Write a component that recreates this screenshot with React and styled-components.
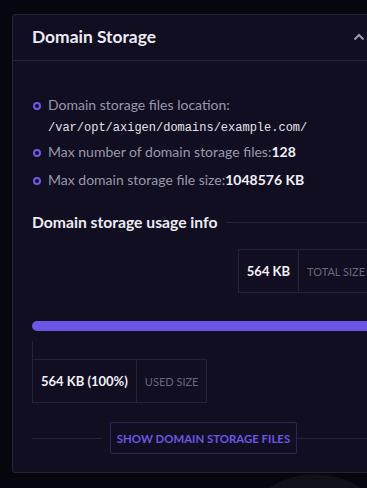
import React from "react";
import styled, { createGlobalStyle } from "styled-components";

const Global = createGlobalStyle`
  html, body { margin: 0; padding: 0; }
  body {
    background: radial-gradient(circle 86px at 315px 560px, #10111a 99%, transparent 100%), #06060f;
    font-family: "Lato", "Noto Sans", sans-serif;
    overflow: hidden;
    width: 367px;
    height: 488px;
  }
`;

const Page = styled.div`
  padding: 14px 0 0 12px;
  width: 420px;
`;

const Card = styled.section`
  width: 384px;
  background: #100e20;
  border: 1px solid #252338;
  border-radius: 3px;
  box-sizing: border-box;
`;

const Header = styled.div`
  height: 46px;
  display: flex;
  align-items: center;
  justify-content: space-between;
  padding: 0 30px 2px 19px;
  box-sizing: border-box;
  border-bottom: 1px solid #252338;
`;

const Title = styled.h2`
  margin: 0;
  font-size: 17.4px;
  font-weight: 700;
  color: #ecebf3;
`;

const Body = styled.div`
  padding: 33px 0 18px 19px;
`;

const List = styled.ul`
  list-style: none;
  margin: 0;
  padding: 0;
  display: flex;
  flex-direction: column;
`;

const Item = styled.li`
  position: relative;
  padding-left: 16px;
  padding-bottom: ${(p) => p.$gap || 0}px;
  font-size: 14px;
  line-height: 22px;
  color: #9a98aa;
  &::before {
    content: "";
    position: absolute;
    left: 1px;
    top: 8px;
    width: 4px;
    height: 4px;
    border: 2px solid #6e5ae8;
    border-radius: 50%;
  }
`;

const Mono = styled.div`
  font-family: "Liberation Mono", "DejaVu Sans Mono", monospace;
  font-size: 12px;
  line-height: 25px;
  color: #e3e2ea;
`;

const Strong = styled.b`
  color: #f2f1f7;
  font-weight: 700;
`;

const SectionHead = styled.div`
  display: flex;
  align-items: center;
  gap: 9px;
  margin-top: 20px;
  &::after {
    content: "";
    flex: 1;
    height: 1px;
    background: #252338;
  }
`;

const SectionTitle = styled.h3`
  margin: 0;
  font-size: 15.7px;
  font-weight: 700;
  color: #ecebf3;
  line-height: 22px;
`;

const Usage = styled.div`
  width: 344px;
`;

const Stat = styled.div`
  display: flex;
  height: 44px;
  border: 1px solid #252338;
  box-sizing: border-box;
  width: fit-content;
  margin-left: ${(p) => (p.$right ? "auto" : "0")};
  margin-top: ${(p) => p.$top || 0}px;
`;

const StatValue = styled.div`
  display: flex;
  align-items: center;
  padding: 0 8px;
  font-size: 13px;
  font-weight: 700;
  color: #f2f1f7;
  border-right: 1px solid #252338;
`;

const StatLabel = styled.div`
  display: flex;
  align-items: center;
  padding: 0 ${(p) => p.$pr || 8}px 0 8px;
  font-size: 11px;
  color: #6a6878;
  text-transform: uppercase;
`;

const Bar = styled.div`
  margin-top: 28px;
  height: 10px;
  border-radius: 5px;
  background: #6b57e6;
`;

const Tick = styled.div`
  width: 1px;
  height: 18px;
  margin-top: 10px;
  background: #252338;
`;

const Footer = styled.div`
  display: flex;
  align-items: center;
  margin-top: 19px;
  &::before {
    content: "";
    width: 70px;
    margin-right: 8px;
    height: 1px;
    background: #252338;
  }
  &::after {
    content: "";
    flex: 1;
    height: 1px;
    background: #252338;
  }
`;

const Button = styled.button`
  height: 32px;
  width: 187px;
  background: transparent;
  border: 1px solid #2c2658;
  border-radius: 2px;
  color: #6b57e6;
  font-family: "Lato", "Noto Sans", sans-serif;
  font-size: 11.4px;
  font-weight: 700;
  letter-spacing: 0;
  white-space: nowrap;
  padding: 0;
  cursor: pointer;
`;

const Chevron = () => (
  <svg width="12" height="8" viewBox="0 0 12 8" fill="none">
    <path d="M1.5 6.5 L6 2 L10.5 6.5" stroke="#9c9bab" strokeWidth="2" />
  </svg>
);

export default function App() {
  return (
    <>
      <Global />
      <Page>
        <Card>
          <Header>
            <Title>Domain Storage</Title>
            <Chevron />
          </Header>
          <Body>
            <List>
              <Item>
                Domain storage files location:
                <Mono>/var/opt/axigen/domains/example.com/</Mono>
              </Item>
              <Item $gap={6}>
                Max number of domain storage files:<Strong>128</Strong>
              </Item>
              <Item>
                Max domain storage file size:<Strong>1048576 KB</Strong>
              </Item>
            </List>
            <SectionHead>
              <SectionTitle>Domain storage usage info</SectionTitle>
            </SectionHead>
            <Usage>
              <Stat $right $top={16}>
                <StatValue>564 KB</StatValue>
                <StatLabel $pr={10}>Total size</StatLabel>
              </Stat>
              <Bar />
              <Tick />
              <Stat>
                <StatValue>564 KB (100%)</StatValue>
                <StatLabel>Used size</StatLabel>
              </Stat>
            </Usage>
            <Footer>
              <Button>SHOW DOMAIN STORAGE FILES</Button>
            </Footer>
          </Body>
        </Card>
      </Page>
    </>
  );
}
